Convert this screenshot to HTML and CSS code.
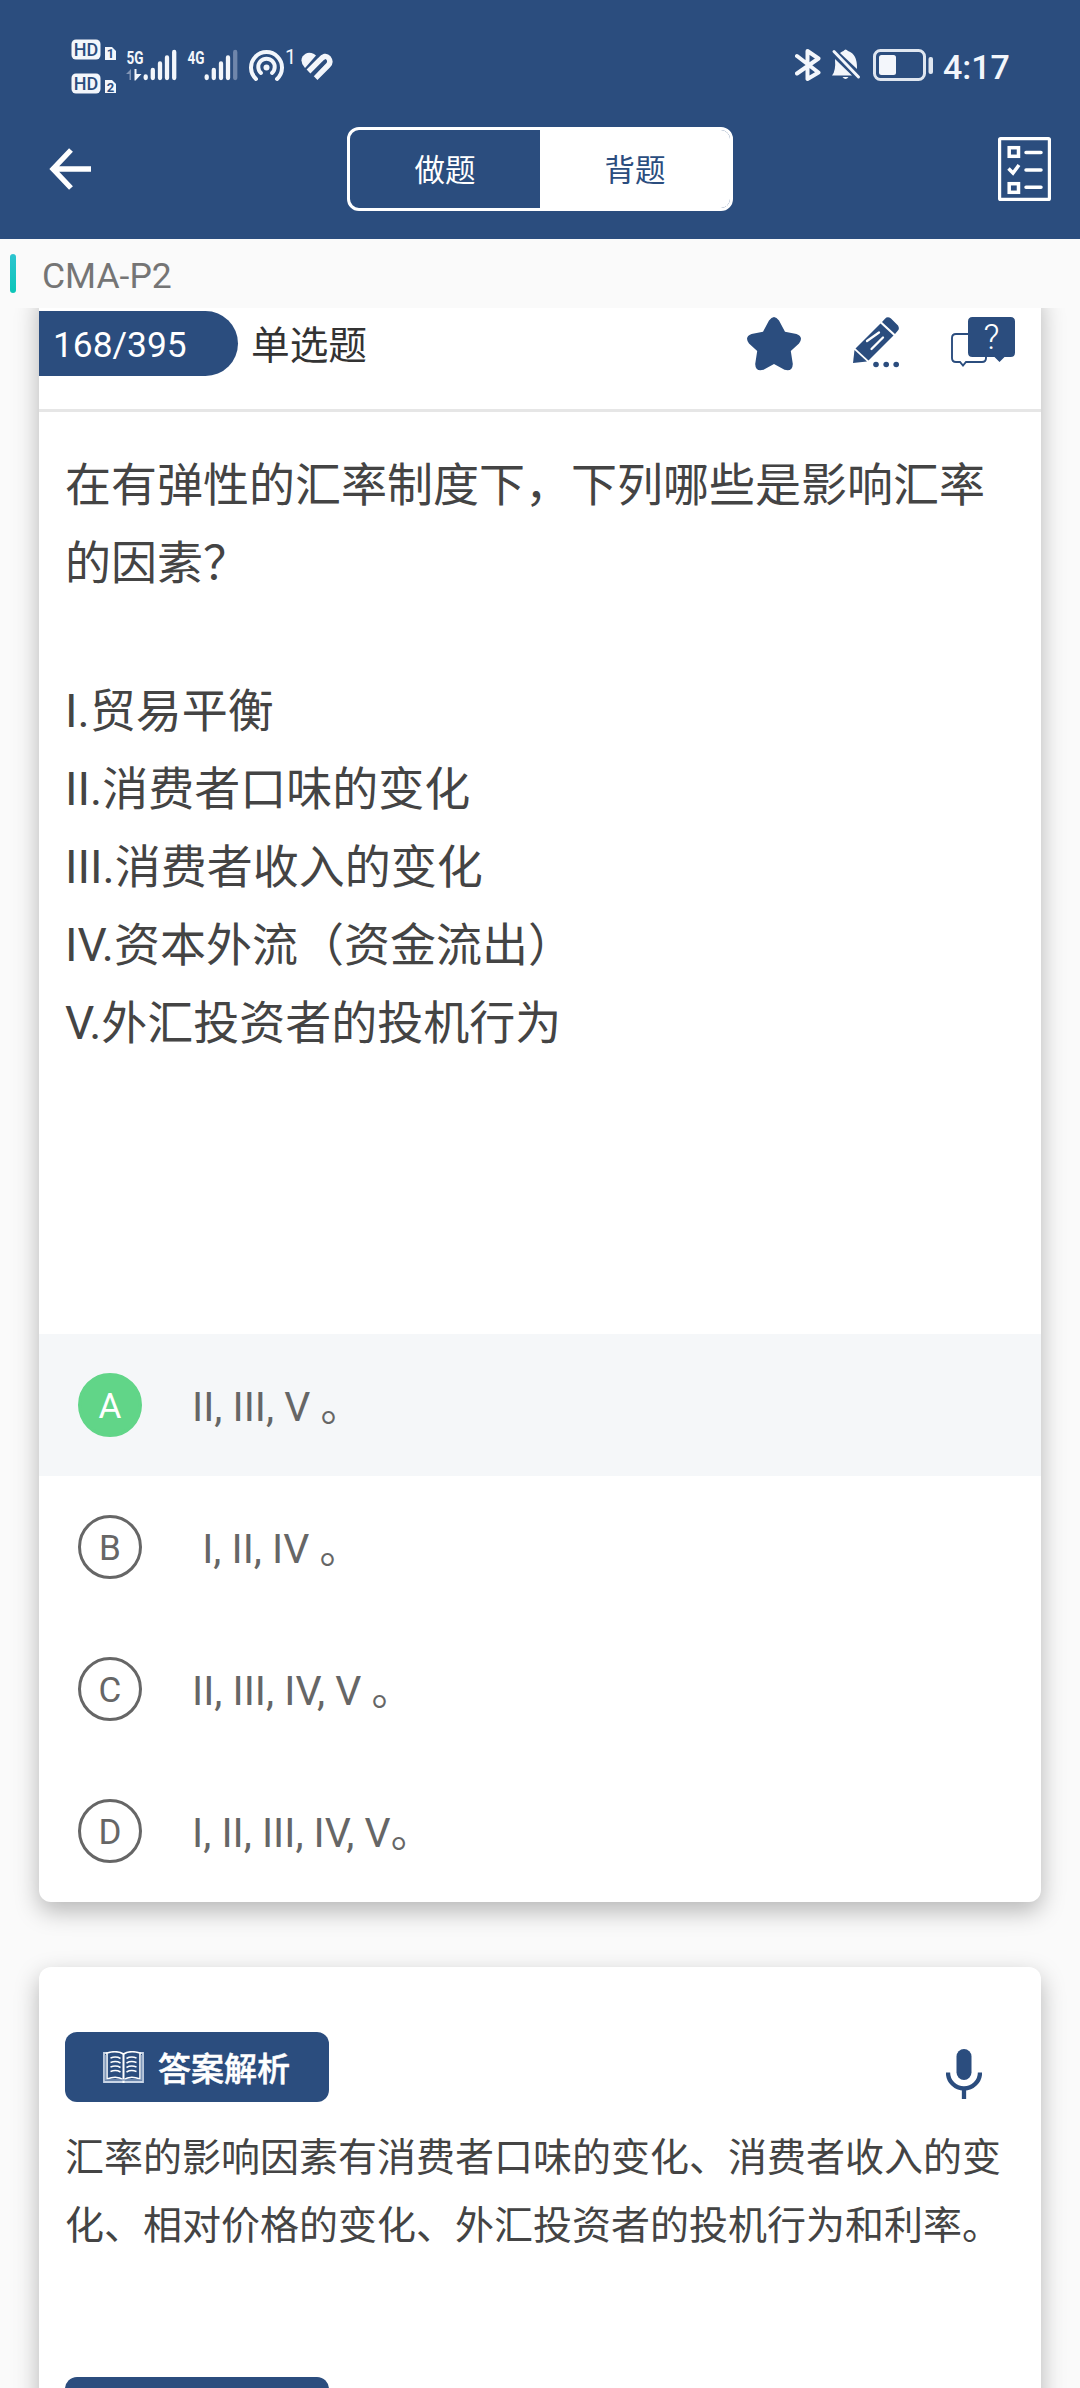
FILE: index.html
```html
<!DOCTYPE html>
<html lang="zh-CN">
<head>
    <meta charset="UTF-8">
    <title>CMA-P2</title>
    <link rel="stylesheet" href="styles.css">
</head>
<body>
    <header class="header">
        <!-- 状态栏 -->
        <div class="status-bar">
            <svg class="icon-hd" width="46" height="62" viewBox="0 -6 46 62">
                <rect x="0.5" y="0.5" width="29" height="20" rx="4.5" fill="#f3f6fb"/>
                <rect x="0.5" y="34.5" width="29" height="20" rx="4.5" fill="#f3f6fb"/>
                <text x="15" y="17" class="hd-text">HD</text>
                <text x="15" y="51" class="hd-text">HD</text>
                <path d="M34 8h7l4 4v9H34z" fill="#f3f6fb"/>
                <path d="M34 41h7l4 4v9H34z" fill="#f3f6fb"/>
                <text x="39.5" y="19" class="sim-text">1</text>
                <text x="39.5" y="52.5" class="sim-text">2</text>
            </svg>
            <svg class="icon-5g" width="52" height="40" viewBox="0 -6 52 40">
                <text x="0.5" y="15.5" class="net-text" textLength="17" lengthAdjust="spacingAndGlyphs">5G</text>
                <path d="M0 26l5-5v11H3.5v-6z" fill="#8194b4"/>
                <path d="M8.5 21h2v5h5l-6 6.5h-1z" fill="#f3f6fb"/>
                <g stroke="#f3f6fb" stroke-width="4.3" stroke-linecap="round">
                    <path d="M19.7 28.5v1.5M26.8 22v8M34 15.5V30M41 9.5V30M48.2 4V30"/>
                </g>
            </svg>
            <svg class="icon-4g" width="52" height="40" viewBox="0 -6 52 40">
                <text x="0.5" y="15.5" class="net-text" textLength="17" lengthAdjust="spacingAndGlyphs">4G</text>
                <g stroke="#f3f6fb" stroke-width="4.3" stroke-linecap="round">
                    <path d="M19.7 28.5v1.5M26.8 22v8M34 15.5V30M41 9.5V30"/>
                    <path d="M48.2 4V30" stroke="#6f86ab"/>
                </g>
            </svg>
            <svg class="icon-hotspot" width="48" height="40" viewBox="0 -6 48 40">
                <g fill="none" stroke="#f3f6fb" stroke-width="4" stroke-linecap="round">
                    <path d="M8 31A15.5 15.5 0 1 1 29 31"/>
                    <path d="M13 25A8.2 8.2 0 1 1 24 25"/>
                </g>
                <circle cx="18.5" cy="19.5" r="3" fill="#f3f6fb"/>
                <text x="37" y="16" class="hot-text">1</text>
            </svg>
            <svg class="icon-heart" width="32" height="28" viewBox="0 0 32 28">
                <g fill="none" stroke="#f3f6fb" stroke-width="5.4">
                    <path d="M7.5 19.5L19 8Q24 2 27.5 6Q30.5 10 27 13.5L14.5 26"/>
                    <path d="M12 24L22.5 12.5" stroke="#2b4d7e" stroke-width="1.5"/>
                </g>
                <path d="M4 16Q-1.5 10 1.5 4.5Q6-1.5 13 2L15 3.5L4.5 15.5z" fill="#f3f6fb"/>
            </svg>
            <svg class="icon-bt" width="26" height="34" viewBox="0 0 26 34">
                <path d="M2 8l21.5 16.5L12.5 31V3L23.5 10.5L2 25.5" fill="none" stroke="#f3f6fb" stroke-width="4" stroke-linejoin="round" stroke-linecap="round"/>
            </svg>
            <svg class="icon-bell" width="30" height="34" viewBox="0 0 30 34">
                <path d="M4 11L21 27.5H1Q5 23 4 11zM9 5Q11 3.500 12.500 3Q14.500 0 17 3Q26.500 6 26 21z" fill="#f3f6fb"/>
                <path d="M3 3.5L27.500 29" stroke="#f3f6fb" stroke-width="3" stroke-linecap="round"/>
                <path d="M11.5 29h6Q14.500 33 11.500 29z" fill="#f3f6fb"/>
            </svg>
            <svg class="icon-battery" width="61" height="34" viewBox="0 0 61 34">
                <rect x="1.5" y="2.5" width="50" height="29" rx="6" fill="none" stroke="#dfe6f0" stroke-width="3"/>
                <rect x="6" y="7" width="17" height="20" rx="2.5" fill="#f3f6fb"/>
                <rect x="55.5" y="9" width="4.5" height="17" rx="2" fill="#dfe6f0"/>
            </svg>
            <span class="time">4:17</span>
        </div>

        <!-- 标题栏 -->
        <div class="nav-bar">
            <svg class="back" width="44" height="44" viewBox="0 0 44 44">
                <path d="M22 3L4 22L22 41M4 22H42" fill="none" stroke="#fff" stroke-width="5.3"/>
            </svg>
            <div class="tabs">
                <div class="tab">做题</div>
                <div class="tab active">背题</div>
            </div>
            <svg class="sheet" width="53" height="64" viewBox="0 0 53 64">
                <rect x="1.6" y="1.6" width="49.8" height="60.8" rx="1" fill="none" stroke="#fff" stroke-width="3.2"/>
                <g fill="none" stroke="#fff" stroke-width="3.5">
                    <rect x="11.2" y="10.7" width="9.3" height="8.6"/>
                    <rect x="11.2" y="46.7" width="9.3" height="8.6"/>
                    <path d="M10.5 31.5L15 36L21 28"/>
                    <path d="M28 15.5H43M28 33H43M28 50.3H43" stroke-linecap="round"/>
                </g>
            </svg>
        </div>
    </header>

    <div class="course">
        <span class="course-mark"></span>
        <span class="course-name">CMA-P2</span>
    </div>

    <main class="content">
        <!-- 题目 -->
        <section class="card question-card">
            <div class="question-head">
                <span class="counter">168/395</span>
                <span class="question-type">单选题</span>
                <div class="tools">
                    <svg width="54" height="54" viewBox="0 0 54 54">
                        <path d="M22 3.5Q27-3.5 32 3.5L38 14.8L49.5 17Q57 20 52 26.5L43.8 34L45.8 47Q45.5 55 37.5 52.8L27 47L16.5 52.8Q8.5 55 8.2 47L10.2 34L2 26.5Q-3 20 4.5 17L16 14.8Z" fill="#2b4d7e"/>
                    </svg>
                    <svg width="46" height="54" viewBox="0 0 46 54">
                        <g fill="#2b4d7e">
                            <path d="M0 46L1.5 33L14 44.5z"/>
                            <path d="M2.5 31.5L27.5 6.5L40.5 18.5L15.5 43.5z"/>
                            <path d="M29 5L32 1.8Q34.500-1 38 1.5L45 8.5Q47 12 44.500 14L42 17z"/>
                            <circle cx="23" cy="47.500" r="2.8"/>
                            <circle cx="33.2" cy="47.500" r="2.8"/>
                            <circle cx="43.2" cy="47.500" r="2.8"/>
                        </g>
                        <path d="M14 24L26 15.5M18.500 32L30 20.500" stroke="#fff" stroke-width="2.3" stroke-linecap="round"/>
                    </svg>
                    <svg width="64" height="54" viewBox="0 0 64 54">
                        <path d="M17 17H5Q1 17 1 21V41Q1 45 5 45H9L12 48.500L15 45H31Q35 45 35 41V38" fill="none" stroke="#2b4d7e" stroke-width="1.9"/>
                        <path d="M21.5 0H59.500Q64 0 64 4.500V35.500Q64 40 59.500 40H53.500L48.500 45L43.500 40H21.500Q17 40 17 35.500V4.500Q17 0 21.500 0z" fill="#2b4d7e"/>
                        <text x="40.5" y="32" class="ask-text">?</text>
                    </svg>
                </div>
            </div>
            <div class="question">
                <p>在有弹性的汇率制度下，下列哪些是影响汇率的因素？</p>
                <p class="blank"></p>
                <p>I.贸易平衡</p>
                <p>II.消费者口味的变化</p>
                <p>III.消费者收入的变化</p>
                <p>IV.资本外流（资金流出）</p>
                <p>V.外汇投资者的投机行为</p>
            </div>
            <ul class="options">
                <li class="option correct"><span class="letter">A</span><span class="option-text">II, III, V 。</span></li>
                <li class="option"><span class="letter">B</span><span class="option-text"> I, II, IV 。</span></li>
                <li class="option"><span class="letter">C</span><span class="option-text">II, III, IV, V 。</span></li>
                <li class="option"><span class="letter">D</span><span class="option-text">I, II, III, IV, V。</span></li>
            </ul>
        </section>

        <!-- 解析 -->
        <section class="card analysis-card">
            <div class="analysis-head">
                <div class="label">
                    <svg width="41" height="33" viewBox="0 0 41 33">
                        <g fill="none" stroke="#fff">
                            <path d="M4 2H1V31H40V2H37" stroke="#c9d5e6" stroke-width="1.8"/>
                            <path d="M4 2V28Q14 24 20.5 29Q27 24 37 28V2Q27-1 20.5 3Q14-1 4 2z" stroke-width="1.6"/>
                            <path d="M20.5 3V32" stroke-width="2"/>
                            <path d="M2.500 4V29H38.500V4" stroke="#7f97b9" stroke-width="1.5"/>
                            <path d="M7.500 7Q13 5 17.500 7.500M7.500 11.500Q13 9.500 17.500 12M7.500 16Q13 14 17.500 16.500M7.500 20.500Q13 18.500 17.500 21M23.500 7.500Q28 5 33.500 7M23.500 12Q28 9.500 33.500 11.500M23.500 16.500Q28 14 33.500 16M23.500 21Q28 18.500 33.500 20.500" stroke-width="1.5"/>
                        </g>
                    </svg>
                    <span>答案解析</span>
                </div>
                <svg class="mic" width="36" height="50" viewBox="0 0 36 50">
                    <rect x="10.5" y="0" width="15" height="31" rx="7.5" fill="#2b4d7e"/>
                    <path d="M2 23.5A16 16 0 0 0 34 23.5M18 39V50" fill="none" stroke="#2b4d7e" stroke-width="4.3"/>
                </svg>
            </div>
            <p class="analysis-text">汇率的影响因素有消费者口味的变化、消费者收入的变化、相对价格的变化、外汇投资者的投机行为和利率。</p>
            <div class="label"></div>
        </section>
    </main>
</body>
</html>
```
FILE: styles.css
```css
* {
    box-sizing: border-box;
    margin: 0;
    padding: 0;
}

body {
    width: 1080px;
    height: 2388px;
    display: flex;
    flex-direction: column;
    overflow: hidden;
    background: #fafafa;
    font-family: Roboto, "Noto Sans CJK SC", sans-serif;
    color: #444;
}

svg {
    display: block;
    flex: none;
}

/* 顶部 */
.header {
    height: 239px;
    flex: none;
    background: #2b4d7e;
    color: #fff;
}

.status-bar {
    height: 127px;
    padding: 33px 71px 0;
    display: flex;
    align-items: flex-start;
}

.icon-5g,
.icon-4g,
.icon-hotspot {
    margin-top: 9px;
    margin-left: 9px;
}

.icon-heart {
    margin-top: 19px;
    margin-left: 5px;
}

.icon-bt,
.icon-bell,
.icon-battery {
    margin-top: 15px;
}

.icon-bt {
    margin-left: auto;
}

.icon-bell {
    margin-left: 10px;
}

.icon-battery {
    margin-left: 12px;
}

.time {
    width: 66px;
    margin-left: 9px;
    margin-top: 13px;
    font-size: 34px;
    line-height: 42px;
    font-weight: 500;
    color: #f3f6fb;
    white-space: nowrap;
}

.hd-text {
    font-size: 18px;
    font-weight: 500;
    fill: #2b4d7e;
    text-anchor: middle;
}

.sim-text {
    font-size: 13px;
    font-weight: 700;
    fill: #2b4d7e;
    text-anchor: middle;
}

.net-text {
    font-size: 19px;
    font-weight: 700;
    fill: #f3f6fb;
}

.hot-text {
    font-size: 20px;
    fill: #f3f6fb;
}

.nav-bar {
    height: 84px;
    padding: 0 29px 0 49px;
    display: flex;
    align-items: center;
}

.tabs {
    width: 386px;
    height: 84px;
    margin-left: 254px;
    display: flex;
    border: 3px solid #fff;
    border-radius: 12px;
    overflow: hidden;
}

.tab {
    flex: 1;
    line-height: 82px;
    font-size: 30.5px;
    text-align: center;
}

.tab.active {
    background: #fff;
    color: #2b4d7e;
}

.sheet {
    margin-left: auto;
}

/* 课程名 */
.course {
    height: 69px;
    flex: none;
    padding-left: 10px;
    display: flex;
    align-items: center;
}

.course-mark {
    width: 6px;
    height: 39px;
    border-radius: 3px;
    background: linear-gradient(#2dc4d0, #0bc6b8);
}

.course-name {
    margin-left: 26px;
    padding-top: 4px;
    font-size: 35.5px;
    color: #757575;
}

/* 内容区 */
.content {
    flex: 1;
    min-height: 0;
    padding: 0 39px;
    overflow: hidden;
}

.card {
    background: #fff;
    box-shadow: 0 9px 24px rgba(0, 0, 0, 0.28);
}

/* 卡片顶部已滚出可视区 */
.question-card {
    height: 1614px;
    margin-top: -20px;
    padding-top: 20px;
    border-radius: 12px;
    display: flex;
    flex-direction: column;
}

.question-head {
    height: 104px;
    padding: 3px 26px 0 0;
    display: flex;
    align-items: flex-start;
    border-bottom: 3px solid #e6e6e6;
}

.counter {
    width: 199px;
    height: 65px;
    padding-left: 14px;
    line-height: 69px;
    border-radius: 0 33px 33px 0;
    background: #2b4d7e;
    color: #fff;
    font-size: 35.3px;
}

.question-type {
    margin-left: 13px;
    line-height: 69px;
    font-size: 38.7px;
    color: #333;
}

.tools {
    margin-left: auto;
    padding-top: 6px;
    display: flex;
    gap: 52px;
}

.ask-text {
    font-size: 35px;
    font-weight: 300;
    fill: #fff;
    text-anchor: middle;
}

.question {
    flex: 1;
    padding: 34px 26px 0;
    font-size: 46px;
    line-height: 78px;
}

.blank {
    height: 70px;
}

.options {
    list-style: none;
}

.option {
    height: 142px;
    padding-left: 39px;
    display: flex;
    align-items: center;
    color: #666;
}

.option.correct {
    background: #f5f7f9;
}

.letter {
    width: 64px;
    height: 64px;
    border: 3px solid #666;
    border-radius: 50%;
    line-height: 61px;
    font-size: 35px;
    text-align: center;
}

.correct .letter {
    border-color: #61d588;
    background: #61d588;
    color: #fff;
}

.option-text {
    margin-left: 50px;
    padding-bottom: 5px;
    font-size: 41px;
    white-space: pre;
}

/* 解析 */
.analysis-card {
    height: 600px;
    margin-top: 65px;
    padding: 65px 26px 0;
    border-radius: 12px;
}

.analysis-head {
    display: flex;
    justify-content: space-between;
}

.label {
    width: 264px;
    height: 70px;
    padding-left: 38px;
    display: flex;
    align-items: center;
    gap: 14px;
    border-radius: 12px;
    background: #2b4d7e;
    color: #fff;
    font-size: 33px;
    font-weight: 500;
    -webkit-text-stroke: 0.5px #fff;
}

.mic {
    margin-top: 17px;
    margin-right: 33px;
}

.analysis-text {
    margin-top: 22px;
    margin-bottom: 117px;
    font-size: 39px;
    line-height: 68px;
}
```
